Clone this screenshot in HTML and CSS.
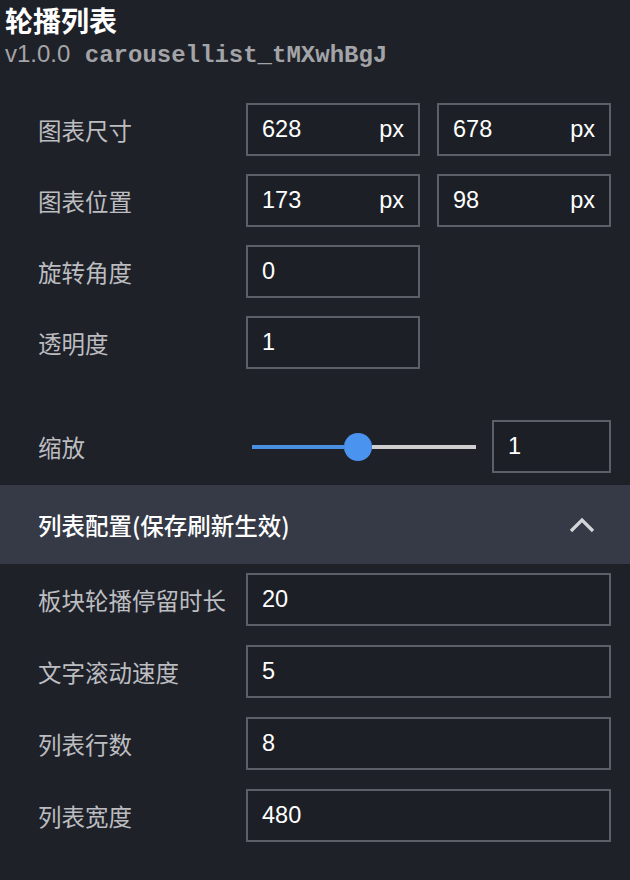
FILE: index.html
```html
<!DOCTYPE html>
<html lang="zh">
<head>
  <meta charset="UTF-8">
  <title>轮播列表</title>
  <link rel="stylesheet" href="styles.css">
</head>
<body>
  <div class="page">
    <div class="panel">
      <div class="head">
        <h1 class="title">轮播列表</h1>
        <div class="sub"><span class="ver">v1.0.0</span><span class="code"> carousellist_tMXwhBgJ</span></div>
      </div>

      <div class="group">
        <div class="row">
          <label class="label">图表尺寸</label>
          <div class="box half"><span class="val">628</span><span class="unit">px</span></div>
          <div class="box half"><span class="val">678</span><span class="unit">px</span></div>
        </div>
        <div class="row">
          <label class="label">图表位置</label>
          <div class="box half"><span class="val">173</span><span class="unit">px</span></div>
          <div class="box half"><span class="val">98</span><span class="unit">px</span></div>
        </div>
        <div class="row">
          <label class="label">旋转角度</label>
          <div class="box half"><span class="val">0</span></div>
        </div>
        <div class="row">
          <label class="label">透明度</label>
          <div class="box half"><span class="val">1</span></div>
        </div>
        <div class="row slider-row">
          <label class="label">缩放</label>
          <div class="slider">
            <div class="track-on"></div>
            <div class="thumb"></div>
            <div class="track-off"></div>
          </div>
          <div class="box small"><span class="val">1</span></div>
        </div>
      </div>

      <div class="section">
        <span>列表配置(保存刷新生效)</span>
        <svg class="chev" width="26" height="16" viewBox="0 0 26 16">
          <path d="M2 14 L13 3 L24 14" fill="none" stroke="#d4d5d8" stroke-width="3.2"/>
        </svg>
      </div>

      <div class="group list">
        <div class="row">
          <label class="label">板块轮播停留时长</label>
          <div class="box"><span class="val">20</span></div>
        </div>
        <div class="row">
          <label class="label">文字滚动速度</label>
          <div class="box"><span class="val">5</span></div>
        </div>
        <div class="row">
          <label class="label">列表行数</label>
          <div class="box"><span class="val">8</span></div>
        </div>
        <div class="row">
          <label class="label">列表宽度</label>
          <div class="box"><span class="val">480</span></div>
        </div>
      </div>
    </div>
    <div class="scrollbar"></div>
  </div>
</body>
</html>
```

FILE: styles.css
```css
body {
  margin: 0;
  background-color: #1f2129;
  font-family: "Liberation Sans", "Noto Sans CJK SC", sans-serif;
  color: #ffffff;
}
.page {
  display: flex;
  height: 880px;
  overflow: hidden;
}
.panel {
  flex: 1;
}
.scrollbar {
  width: 3px;
  background: linear-gradient(#000 0, #000 33px, #c4c4c4 33px, #c4c4c4 168px, #8c8c8c 168px, #8c8c8c 200px, #c4c4c4 200px);
}
.head {
  padding: 3px 0 0 5px;
}
.title {
  margin: 0;
  font-family: "Noto Sans CJK SC", sans-serif;
  font-size: 28px;
  font-weight: 700;
  line-height: 34px;
}
.sub {
  margin-top: 2px;
  color: #a3a4a7;
  font-size: 24px;
  line-height: 30px;
  white-space: pre;
}
.ver {
  font-family: "Liberation Sans", sans-serif;
}
.code {
  font-family: "Liberation Mono", monospace;
  font-weight: 700;
}
.group {
  padding: 32px 19px 0 38px;
}
.group.list {
  padding-top: 9px;
}
.row {
  display: flex;
  align-items: center;
  height: 53px;
  margin-bottom: 18px;
}
.list .row {
  margin-bottom: 19px;
}
.label {
  width: 208px;
  flex: none;
  font-family: "Noto Sans CJK SC", sans-serif;
  font-size: 23.5px;
  color: #bcbdc0;
  white-space: nowrap;
}
.box {
  flex: 1;
  height: 53px;
  box-sizing: border-box;
  border: 2px solid #5c5f67;
  background-color: #1d1f26;
  display: flex;
  align-items: center;
  justify-content: space-between;
  padding: 0 14px 0 14px;
  font-size: 23.5px;
}
.box.half {
  flex: none;
  width: 174px;
}
.box.half + .box.half {
  margin-left: 17px;
}
.box.small {
  flex: none;
  width: 119px;
}
.unit {
  color: #ffffff;
}
.slider-row {
  margin-top: 51px;
  margin-bottom: 12px;
}
.slider {
  flex: 1;
  display: flex;
  align-items: center;
  margin: 0 16px 0 6px;
}
.track-on {
  width: 92px;
  height: 4px;
  background-color: #4a90e2;
}
.thumb {
  width: 28px;
  height: 28px;
  border-radius: 50%;
  background-color: #4a94ef;
  flex: none;
}
.track-off {
  flex: 1;
  height: 4px;
  background-color: #cfcfcf;
}
.section {
  height: 79px;
  background-color: #353a46;
  display: flex;
  align-items: center;
  justify-content: space-between;
  padding: 0 35px 0 38px;
  font-family: "Noto Sans CJK SC", sans-serif;
  font-size: 23.5px;
  font-weight: 500;
  color: #ffffff;
}
.chev {
  display: block;
}
```
